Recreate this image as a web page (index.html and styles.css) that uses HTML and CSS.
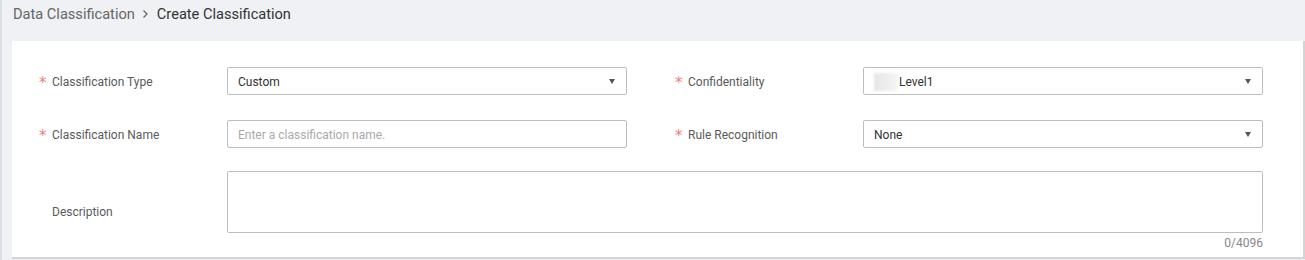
FILE: index.html
```html
<!DOCTYPE html>
<html lang="en">
<head>
    <meta charset="UTF-8">
    <meta name="viewport" content="width=device-width, initial-scale=1.0">
    <title>Create Classification</title>
    <link rel="stylesheet" href="styles.css">
</head>
<body>
    <div class="page">
        <div class="breadcrumb">
            <span class="crumb">Data Classification</span>
            <svg class="sep" width="7" height="10" viewBox="0 0 7 10"><path d="M1.5 1.5 L5 5 L1.5 8.5" fill="none" stroke="#666" stroke-width="1.3"/></svg>
            <span class="crumb current">Create Classification</span>
        </div>
        <div class="card">
            <div class="form-grid">
                <div class="field">
                    <label class="label required">Classification Type</label>
                    <div class="select"><span>Custom</span><i class="caret"></i></div>
                </div>
                <div class="field">
                    <label class="label required">Confidentiality</label>
                    <div class="select"><span><b class="blur"></b>Level1</span><i class="caret"></i></div>
                </div>
                <div class="field">
                    <label class="label required">Classification Name</label>
                    <input type="text" class="input" placeholder="Enter a classification name.">
                </div>
                <div class="field">
                    <label class="label required">Rule Recognition</label>
                    <div class="select"><span>None</span><i class="caret"></i></div>
                </div>
            </div>
            <div class="field desc">
                <label class="label">Description</label>
                <div class="desc-box">
                    <textarea class="textarea"></textarea>
                    <div class="counter">0/4096</div>
                </div>
            </div>
        </div>
    </div>
</body>
</html>
```

FILE: styles.css
```css
html, body {
    margin: 0;
    padding: 0;
}
body {
    font-family: Roboto, "Noto Sans", Arial, sans-serif;
    background-color: #eff1f4;
    height: 260px;
    overflow: hidden;
}
.page {
    border-left: 2px solid #dcdfe4;
    height: 260px;
    padding-left: 10px;
    box-sizing: border-box;
}
.breadcrumb {
    height: 41px;
    display: flex;
    align-items: center;
    padding-left: 1px;
    padding-bottom: 14px;
    box-sizing: border-box;
    font-size: 14.6px;
}
.crumb {
    color: #666;
}
.crumb.current {
    color: #333;
}
.sep {
    margin: 1px 8px 0 7px;
}
.card {
    background: white;
    border-right: 2px solid #d4d4d4;
    border-bottom: 2px solid #d4d4d4;
    height: 218px;
    box-sizing: border-box;
    padding: 26px 0 0 28px;
}
.form-grid {
    display: grid;
    grid-template-columns: 587px 587px;
    column-gap: 49px;
    row-gap: 25px;
}
.field {
    display: flex;
    align-items: center;
}
.label {
    width: 187px;
    flex-shrink: 0;
    font-size: 12px;
    color: #5a5a5a;
    padding-left: 12px;
    padding-top: 2px;
    box-sizing: border-box;
    position: relative;
}
.label.required::before {
    content: "*";
    font-family: "DejaVu Sans", sans-serif;
    color: #e8837d;
    position: absolute;
    left: -1px;
    top: 1px;
    font-size: 15px;
    line-height: 18px;
}
.select, .input {
    width: 400px;
    height: 28px;
    box-sizing: border-box;
    border: 1px solid #bdbdbd;
    border-radius: 2px;
    font-size: 12px;
    color: #333;
    font-family: inherit;
}
.select {
    display: flex;
    align-items: center;
    justify-content: space-between;
    padding: 1px 11px 0 10px;
}
.select span {
    display: flex;
    align-items: center;
}
.input {
    padding: 1px 10px 0;
    outline: none;
}
.input::placeholder {
    color: #aaa;
}
.caret {
    width: 0;
    height: 0;
    border-left: 3px solid transparent;
    border-right: 3px solid transparent;
    border-top: 5px solid #555;
}
.blur {
    display: inline-block;
    width: 24px;
    height: 18px;
    margin-right: 1px;
    background: linear-gradient(90deg, #e6e6e6, #eeeeee 60%, #f6f6f6);
    filter: blur(1px);
}
.desc {
    margin-top: 23px;
    align-items: flex-start;
}
.desc .label {
    margin-top: 32px;
}
.desc-box {
    width: 1036px;
}
.textarea {
    display: block;
    width: 100%;
    height: 62px;
    box-sizing: border-box;
    border: 1px solid #bdbdbd;
    border-radius: 2px;
    resize: none;
    outline: none;
}
.counter {
    text-align: right;
    font-size: 12px;
    color: #888;
    margin-top: 3px;
}
```
